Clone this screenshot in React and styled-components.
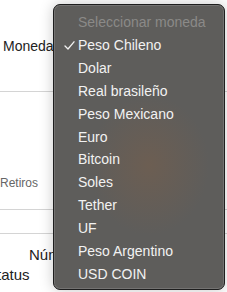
import React from "react";
import styled, { createGlobalStyle } from "styled-components";

const Global = createGlobalStyle`
  html, body { margin: 0; padding: 0; background: #fff; overflow: hidden; }
  body { font-family: "Liberation Sans", Arial, sans-serif; }
`;

const Page = styled.div`
  position: relative;
  width: 227px;
  height: 292px;
  overflow: hidden;
  background: #fff;
`;

const Section = styled.div`
  height: ${(p) => p.h}px;
  border-bottom: ${(p) => (p.line ? "1px solid #d4d4d4" : "none")};
  display: flex;
  align-items: ${(p) => p.align || "center"};
  padding: ${(p) => p.pad || "0"};
  box-sizing: border-box;
`;

const Label = styled.span`
  font-size: ${(p) => p.size || 14}px;
  color: ${(p) => p.color || "#222"};
  margin-left: ${(p) => p.ml || 0}px;
  white-space: nowrap;
  line-height: 1;
`;

const Stack = styled.div`
  display: flex;
  flex-direction: column;
  gap: 5px;
`;

const Menu = styled.div`
  position: absolute;
  left: 53px;
  top: 4px;
  width: 172px;
  height: 286px;
  box-sizing: border-box;
  border-radius: 7px;
  border: 1px solid #1e1e1e;
  background:
    radial-gradient(ellipse 60px 70px at 95px 160px, rgba(120, 95, 75, 0.55), rgba(120, 95, 75, 0) 100%),
    #5e5d5b;
  box-shadow: inset 0 0 0 1px rgba(255, 255, 255, 0.14), 0 0 14px rgba(0, 0, 0, 0.22);
  padding: 6px 0 4px 0;
  display: flex;
  flex-direction: column;
`;

const Item = styled.div`
  height: 23px;
  display: flex;
  align-items: center;
  font-size: 14px;
  color: ${(p) => (p.disabled ? "#8b8a88" : "#f2f2f2")};
  white-space: nowrap;
`;

const CheckCol = styled.span`
  width: 24px;
  padding-left: 10px;
  box-sizing: border-box;
  display: flex;
  align-items: center;
`;

const options = [
  "Peso Chileno",
  "Dolar",
  "Real brasileño",
  "Peso Mexicano",
  "Euro",
  "Bitcoin",
  "Soles",
  "Tether",
  "UF",
  "Peso Argentino",
  "USD COIN",
];

const Check = () => (
  <svg width="11" height="9" viewBox="0 0 11 9">
    <polyline points="1,5 4,8 10,0.8" fill="none" stroke="#f2f2f2" strokeWidth="1.3" strokeLinecap="round" strokeLinejoin="round" />
  </svg>
);

export default function App() {
  return (
    <Page>
      <Global />
      <Section h={92} line>
        <Label ml={3} style={{ marginTop: 0 }}>Moneda</Label>
      </Section>
      <Section h={118} line align="flex-end" pad="0 0 20px 0">
        <Label size={12} color="#666">Retiros</Label>
      </Section>
      <Section h={24} line />
      <Section h={58} align="flex-start" pad="13px 0 0 0">
        <Stack>
          <Label size={15} ml={29}>Número</Label>
          <Label size={15} ml={-13}>Status</Label>
        </Stack>
      </Section>
      <Menu>
        <Item disabled>
          <CheckCol />
          Seleccionar moneda
        </Item>
        {options.map((o, i) => (
          <Item key={o}>
            <CheckCol>{i === 0 ? <Check /> : null}</CheckCol>
            {o}
          </Item>
        ))}
      </Menu>
    </Page>
  );
}
